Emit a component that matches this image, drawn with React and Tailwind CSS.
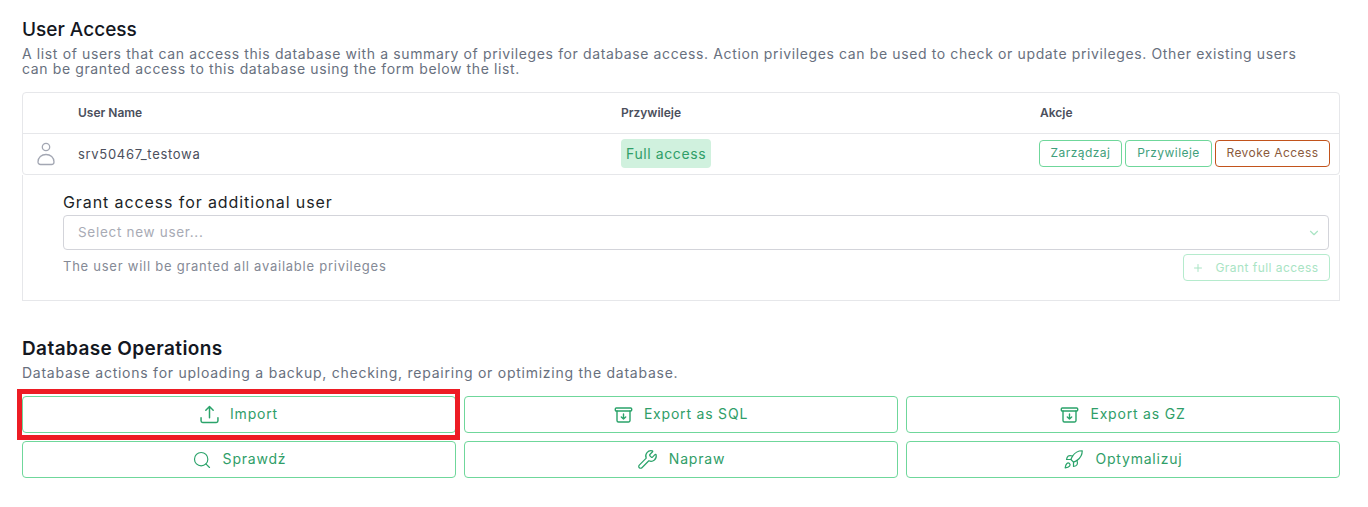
import { Search, Wrench, Rocket, Plus, ChevronDown } from 'lucide-react';

const font = { fontFamily: 'Inter' };

function UploadIcon() {
  return (
    <svg width="19" height="19" viewBox="0 0 18 18" fill="none" stroke="currentColor" strokeWidth="1.4" strokeLinecap="round" strokeLinejoin="round">
      <path d="M9 12V1.500M5.500 5 9 1.500 12.500 5" />
      <path d="M1 12v3a1.500 1.500 0 0 0 1.500 1.500h13A1.500 1.500 0 0 0 17 15v-3" />
    </svg>
  );
}

function ArchiveDownIcon() {
  return (
    <svg width="19" height="16" viewBox="0 0 18 16" fill="none" stroke="currentColor" strokeWidth="1.4" strokeLinecap="round" strokeLinejoin="round">
      <rect x="0.800" y="1" width="16.400" height="3" rx="1" />
      <path d="M2.500 4v9.500A1.500 1.500 0 0 0 4 15h10a1.500 1.500 0 0 0 1.500-1.500V4" />
      <path d="M9 7v5M6.800 10 9 12l2.200-2" />
    </svg>
  );
}

function UserIcon() {
  return (
    <svg width="18" height="24" viewBox="0 0 18 24" fill="none" stroke="#a3a7b3" strokeWidth="1.3">
      <circle cx="9" cy="5" r="3.700" />
      <path d="M1 20c0-4.500 3.500-7.500 8-7.500s8 3 8 7.500c0 1.500-1 2.500-2.500 2.500h-11C2 22.500 1 21.500 1 20Z" />
    </svg>
  );
}

function OpButton({ icon, label }) {
  return (
    <button className="h-[37px] border border-[#6fd79b] rounded-[4px] flex items-center justify-center gap-[11px] text-[14px] tracking-[0.8px] text-[#2f9e68] bg-white pb-[2px]">
      <span className="text-[#2aa36a] mt-[2px]">{icon}</span>
      {label}
    </button>
  );
}

function SmallButton({ label, wide, danger }) {
  return (
    <button className={`h-[27px] rounded-[4px] border text-[12px] tracking-[0.45px] bg-white ${wide} ${danger ? 'border-[#c2531c] text-[#8a5a3c]' : 'border-[#6fd79b] text-[#3f9f7c]'}`}>
      {label}
    </button>
  );
}

export default function App() {
  return (
    <div className="relative w-[1368px] h-[507px] bg-white overflow-hidden pl-[22px] pr-[28px] pt-[19px]" style={font}>
      <h2 className="text-[19px] leading-[22px] font-medium text-[#14171f]">User Access</h2>
      <p className="mt-[5px] text-[14px] leading-[15px] tracking-[0.62px] text-[#68707e] w-[1300px]">
        A list of users that can access this database with a summary of privileges for database access. Action privileges can be used to check or update privileges. Other existing users can be granted access to this database using the form below the list.
      </p>

      <div className="mt-[16px] border border-[#e6e7ea] rounded-[4px] h-[83px] flex flex-col">
        <div className="h-[41px] flex items-center border-b border-[#e6e7ea] text-[12px] font-semibold text-[#4b4f5c]">
          <div className="w-[598px] pl-[55px]">User Name</div>
          <div className="w-[419px]">Przywileje</div>
          <div>Akcje</div>
        </div>
        <div className="flex-1 flex items-center">
          <div className="w-[55px] pl-[14px]"><UserIcon /></div>
          <div className="w-[543px] mt-[2px] text-[13px] tracking-[0.7px] text-[#4b4f5c]">srv50467_testowa</div>
          <div className="w-[418px] mb-[2px]">
            <span className="inline-flex items-center h-[29px] px-[5px] rounded-[4px] bg-[#d0f1de] text-[14px] tracking-[0.6px] text-[#2f9e68]">Full access</span>
          </div>
          <div className="flex gap-[3px] mb-[2px]">
            <SmallButton label="Zarządzaj" wide="w-[83px]" />
            <SmallButton label="Przywileje" wide="w-[87px]" />
            <SmallButton label="Revoke Access" wide="w-[115px]" danger />
          </div>
        </div>
      </div>

      <div className="h-[126px] border-x border-b border-[#e6e7ea] pl-[40px] pr-[10px] pt-[17px]">
        <div className="text-[16px] leading-[20px] tracking-[0.9px] text-[#1c1f27]">Grant access for additional user</div>
        <div className="mt-[3px] h-[35px] border border-[#d3d4da] rounded-[4px] flex items-center justify-between pl-[14px] pr-[7px] text-[13.5px] tracking-[0.7px] text-[#a8abb5]">
          Select new user...
          <ChevronDown size={14} className="text-[#a9e4c4]" />
        </div>
        <div className="mt-[4px] mr-[-1px] flex items-start justify-between">
          <span className="mt-[3px] text-[13px] tracking-[0.75px] text-[#858a96]">The user will be granted all available privileges</span>
          <button className="h-[27px] w-[147px] border border-[#b5ebcd] rounded-[4px] flex items-center justify-center gap-[11px] pr-[2px] text-[12px] tracking-[0.45px] text-[#a9e4c4]">
            <Plus size={12} />
            Grant full access
          </button>
        </div>
      </div>

      <h2 className="mt-[37px] text-[19px] leading-[22px] font-semibold tracking-[0.4px] text-[#14171f]">Database Operations</h2>
      <p className="mt-[4px] text-[14px] leading-[17px] tracking-[0.75px] text-[#68707e]">Database actions for uploading a backup, checking, repairing or optimizing the database.</p>

      <div className="mt-[15px] grid grid-cols-3 gap-x-[8px] gap-y-[8px]">
        <OpButton icon={<UploadIcon />} label="Import" />
        <OpButton icon={<ArchiveDownIcon />} label="Export as SQL" />
        <OpButton icon={<ArchiveDownIcon />} label="Export as GZ" />
        <OpButton icon={<Search size={20} strokeWidth={1.4} />} label="Sprawdź" />
        <OpButton icon={<Wrench size={21} strokeWidth={1.4} />} label="Napraw" />
        <OpButton icon={<Rocket size={21} strokeWidth={1.4} />} label="Optymalizuj" />
      </div>

      <div className="absolute left-[17px] top-[389px] w-[443px] h-[51px] border-[5px] border-[#ed1c24]" />
    </div>
  );
}
